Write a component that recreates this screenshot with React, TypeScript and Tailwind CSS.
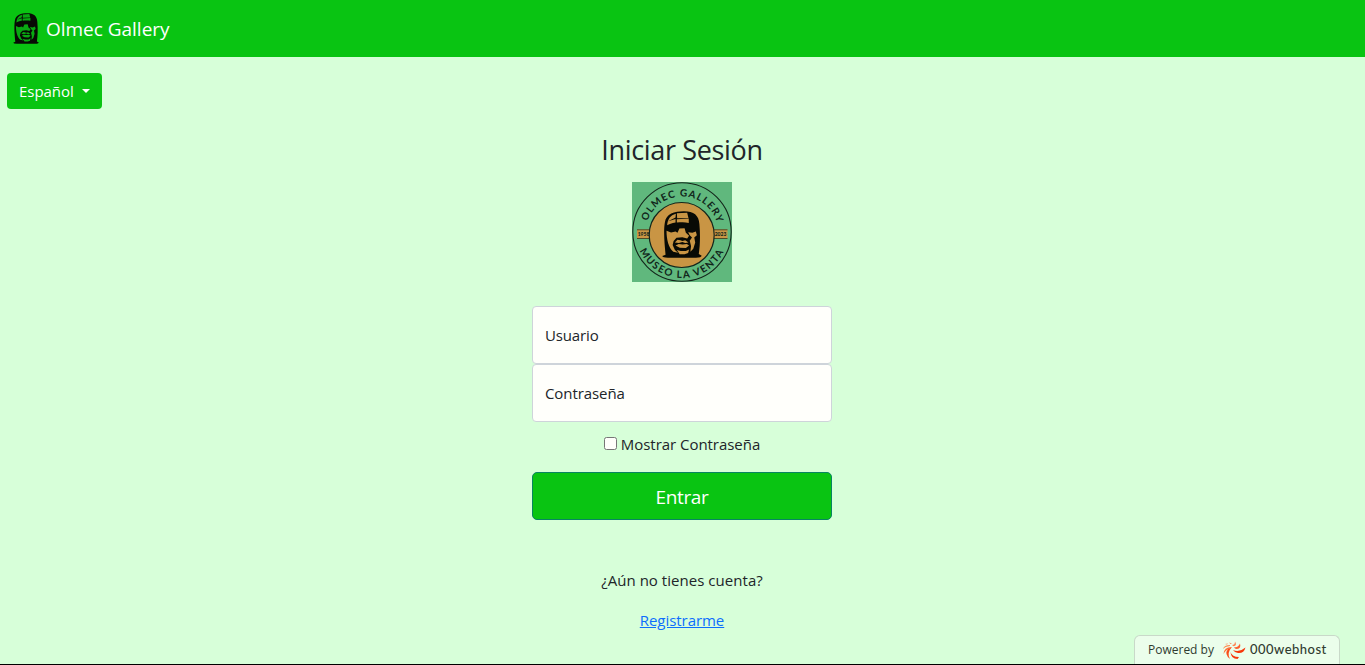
import React from "react";

function OlmecHead({ face, className }: { face: string; className: string }) {
  return (
    <svg viewBox="20 18 124 142" preserveAspectRatio="none" className={className} aria-hidden="true">
      <path d="M31 150C28 118 24 78 29 52C33 27 58 19 88 19C119 19 134 31 136 58C139 92 138 122 134 148L143 153Q142 159 125 159H38Q22 159 21 154Z" fill="#080a05" />
      <g fill={face}>
        <path d="M36 61C37 43 46 30 63 26L62 38L39 49L62 42L62 53C50 55 42 58 36 61Z" />
        <path d="M66 25L98 23L102 39L67 40ZM66 43L103 41V54C90 51 78 52 66 53Z" />
        <path d="M34 78L48 83L62 80L68 84L74 71L90 70L94 84L104 93L98 101L83 97L65 99L56 109L53 121L60 136L70 144L55 141C40 129 34 104 34 78Z" />
        <path d="M101 82L114 84L125 80L128 91L120 98L123 113L117 132L108 141L110 124L106 108L113 98L106 91Z" />
        <path d="M60 113L68 105L77 106L83 109L92 106L102 113L92 115L83 112L72 115Z" />
        <path d="M62 122L72 118L84 119L97 118L104 122L94 130L75 129Z" />
        <path d="M66 136L78 139H94L104 134L101 145L90 149H75Z" />
      </g>
    </svg>
  );
}

function GalleryLogo() {
  return (
    <svg viewBox="0 0 100 100" className="block size-full">
      <defs>
        <path id="arc-top" d="M13.500 51A36.500 36.500 0 0 1 86.500 51" />
        <path id="arc-bottom" d="M4 50A46 46 0 0 0 96 50" />
      </defs>
      <circle cx="50" cy="50" r="49.2" fill="none" stroke="#14261b" strokeWidth="1.1" />
      <path d="M5 47.5H18V56.5H5ZM82 47.5H95.500V56.5H82Z" fill="#c99544" />
      <path d="M5 47.800H18M5 56.500H18M82 47.800H95.500M82 56.500H95.500" stroke="#3a3318" strokeWidth="0.8" />
      <circle cx="49.700" cy="53" r="32.500" fill="#c99544" stroke="#14261b" strokeWidth="1.200" />
      <g fill="#10251a" fontFamily="Lato, sans-serif" fontWeight="700" textAnchor="middle">
        <text fontSize="10" letterSpacing="1">
          <textPath href="#arc-top" startOffset="51%">OLMEC GALLERY</textPath>
        </text>
        <text fontSize="10" letterSpacing="1.500">
          <textPath href="#arc-bottom" startOffset="50%">MUSEO LA VENTA</textPath>
        </text>
        <text x="11.500" y="54" fontSize="5" fontWeight="900">1958</text>
        <text x="88.500" y="54" fontSize="5" fontWeight="900">2023</text>
      </g>
    </svg>
  );
}

function HostMark() {
  return (
    <svg viewBox="0 0 24 20" className="h-5 w-6 shrink-0">
      <path d="M1 9Q2 5 8 5L8 6Q3 6.500 1 9Z" fill="#ff8b51" />
      <path d="M1.500 14Q2 7 9.500 7V8Q4 9 1.500 14Z" fill="#ff7038" />
      <path d="M8 19Q2 14 6 9L9.500 7.500Q4.500 13 8 19Z" fill="#fa4d18" />
      <path d="M8.500 12Q10 17 17 17L15.500 19Q9 19 8.500 12Z" fill="#f7370b" />
      <path d="M11 10Q17 13 23.500 7.500Q22 13.500 16 13Q12.500 12.500 11 10Z" fill="#f7370b" />
      <path d="M12 7Q16 8 18 3.500Q19.500 9 14 9Q12.500 8.500 12 7Z" fill="#fb6030" />
      <path d="M10 5Q13 5 13 1.500Q15.500 5.500 11.500 6.200ZM7 2.500L10 3.500L8.500 4ZM3 4L6 3.500L5 4.500Z" fill="#ff8350" />
    </svg>
  );
}

export default function App() {
  return (
    <div className="relative flex h-[665px] flex-col overflow-hidden border-b border-black bg-[#d7ffd9] font-['Open_Sans','Noto_Sans',sans-serif] text-base text-[#212529]">
      <nav className="flex h-[57px] shrink-0 items-center bg-[#09c412] pl-[13px] text-white">
        <OlmecHead face="#09a812" className="h-[31px] w-[26px]" />
        <span className="ml-[7px] text-[19px] leading-[30px] tracking-[-0.02px]">Olmec Gallery</span>
      </nav>
      <button className="mt-4 ml-[7px] flex h-9 w-[95px] shrink-0 items-center rounded bg-[#09c412] pl-3 text-white">
        <span className="text-[15px] leading-6 tracking-[-0.05px]">Español</span>
        <span className="ml-[8px] border-x-4 border-t-4 border-x-transparent border-t-white" />
      </button>
      <main className="ml-[532px] flex w-[300px] flex-col items-center pt-[24px]">
        <h1 className="text-[27px] leading-[34px] tracking-[-0.35px]">Iniciar Sesión</h1>
        <div className="mt-[15px] size-[100px] bg-[#60b87d]">
          <div className="grid size-full [grid-template-areas:'logo'] place-items-center">
            <div className="size-full [grid-area:logo]"><GalleryLogo /></div>
            <OlmecHead face="#c99544" className="mt-[5px] h-[47px] w-[40px] [grid-area:logo]" />
          </div>
        </div>
        <form className="mt-6 flex w-full flex-col items-center">
          <input aria-label="Usuario" placeholder="Usuario" className="h-[58px] w-full rounded border border-[#ced4da] bg-[#fffffb] px-3 text-[15px] tracking-[-0.14px] placeholder:text-[#212529]" />
          <input aria-label="Contraseña" placeholder="Contraseña" className="h-[58px] w-full rounded border border-[#ced4da] bg-[#fffffb] px-3 text-[15px] tracking-[-0.08px] placeholder:text-[#212529]" />
          <label className="mt-[10px] flex h-6 items-center text-[15px] tracking-[-0.04px]">
            <input type="checkbox" className="mr-1 mb-0.5 size-[13px] appearance-none rounded-[2.5px] border border-[#767676] bg-[#fffffb]" />
            Mostrar Contraseña
          </label>
          <button type="button" className="mt-4 h-12 w-full rounded-[5px] border border-[#078562] bg-[#09c412] pt-0.5 text-[19px] tracking-[-0.35px] text-white">Entrar</button>
        </form>
        <p className="mt-12 text-[15px] leading-6 tracking-[0.04px]">¿Aún no tienes cuenta?</p>
        <a href="#" className="mt-4 text-[15px] leading-6 tracking-[-0.05px] text-[#0d6efd] underline">Registrarme</a>
      </main>
      <div className="absolute right-[25px] bottom-0 flex h-[29px] w-[206px] items-center rounded-t-md border border-b-0 border-[#c9d9c9] bg-[#ebfeeb] pl-[13px] text-[#303b30]">
        <span className="text-[12px] whitespace-nowrap">Powered by</span>
        <span className="ml-2"><HostMark /></span>
        <span className="ml-[4px] font-[Lato] text-[13px] font-medium tracking-[0.48px]">000webhost</span>
      </div>
    </div>
  );
}
